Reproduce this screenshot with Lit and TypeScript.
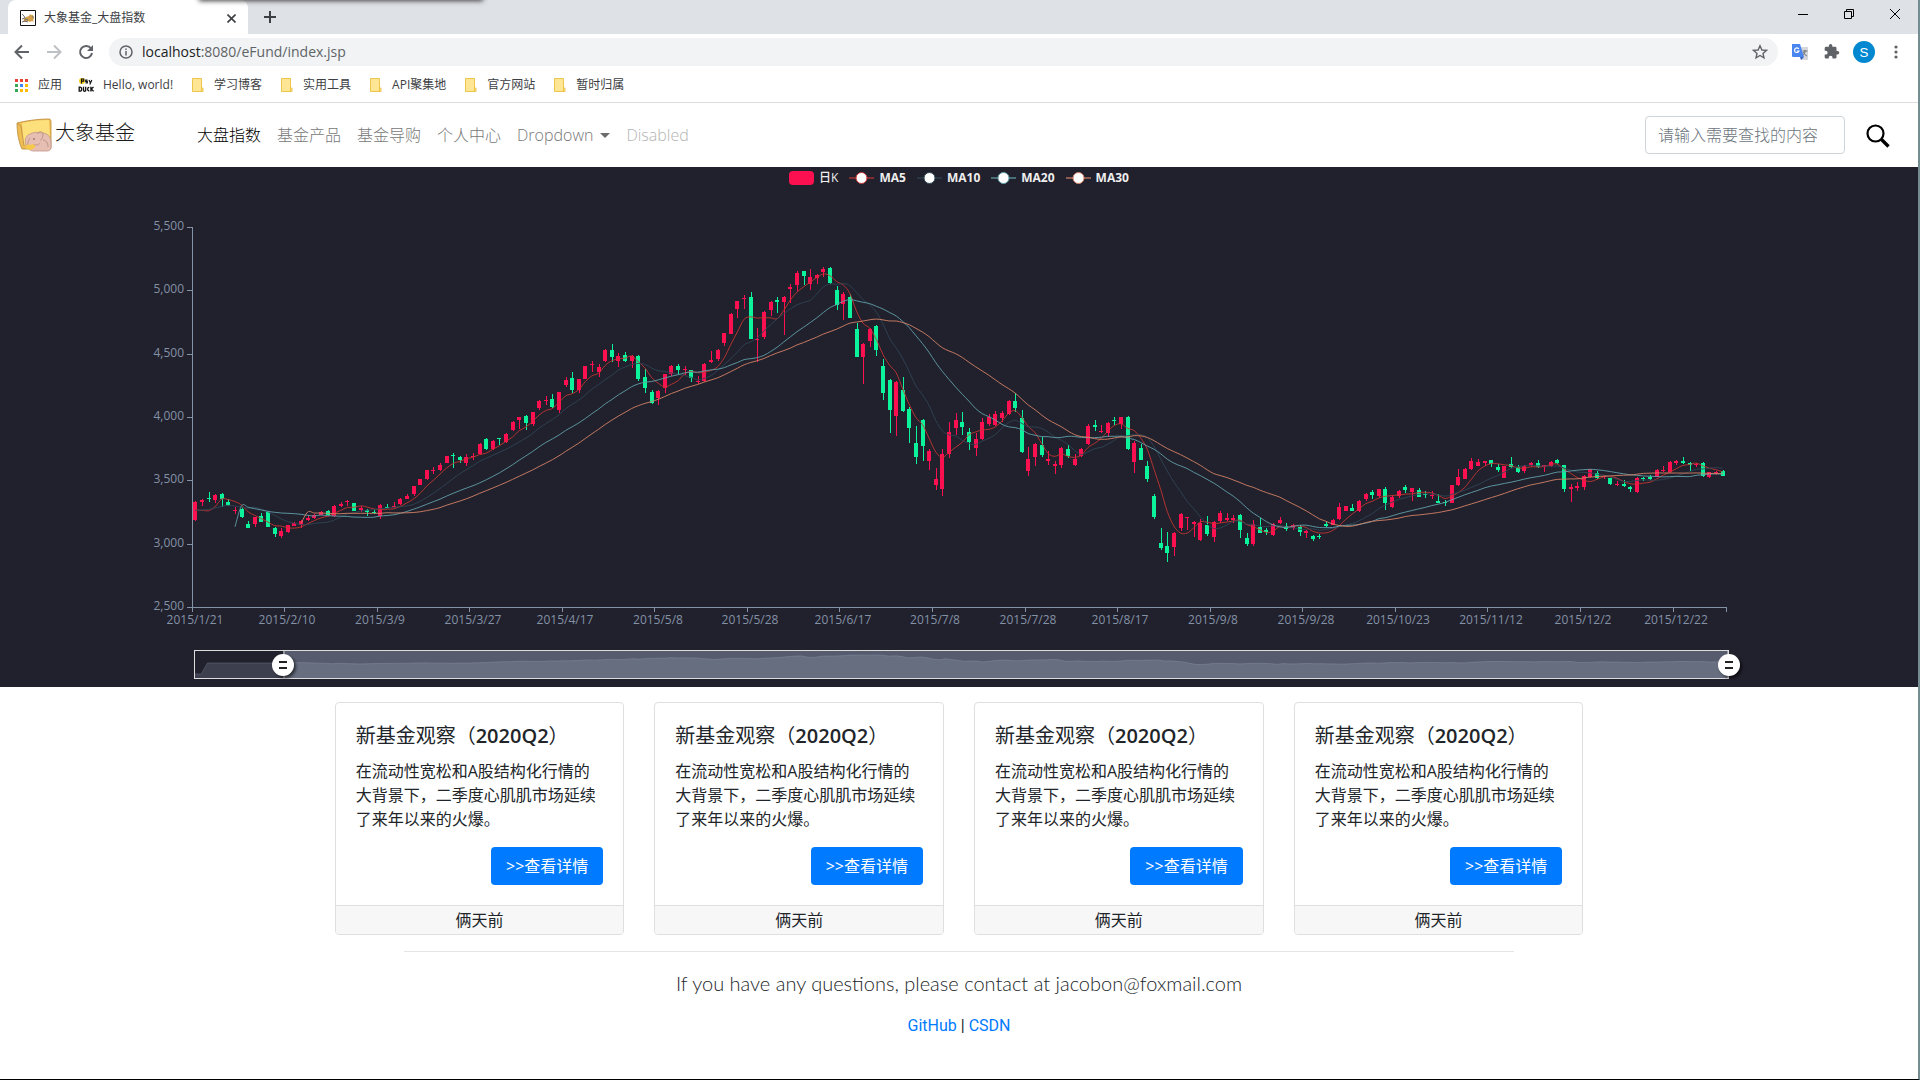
import { LitElement, html, css, svg } from "lit";
import { customElement, property, state } from "lit/decorators.js";

/* ---------- Price data ---------- */

interface Candle {
  up: boolean;
  top: number;
  bottom: number;
  high: number;
  low: number;
}

// Each band holds consecutive sessions as body top, body bottom, high, low.
// r = rising day, g = falling day. Figures are thirds of a unit below the band's base.
const BANDS: Array<[number, string]> = [
  [777, `r155,211,153,213 r149,157,147,167 g144,148,126,155 r134,150,132,158 g131,148,130,170
    g155,165,147,167 r179,182,171,192 g176,201,170,203 g223,234,213,235 r202,222,200,231
    g198,215,190,216 g185,230,184,232 g234,252,231,261 r243,258,235,263 r226,247,225,249
    r220,227,217,228 r213,226,211,233 r204,209,194,213 r196,205,193,206 r185,194,183,195
    g183,196,181,197 r167,197,165,202 r162,168,157,170 r153,155,151,167 g159,182,158,183
    r174,180,169,186 g180,186,178,197 g186,189,180,192 r165,198,163,206 g170,173,163,174
    r169,172,157,174 r148,162,145,165 r138,146,133,147 r108,132,107,137 r88,104,87,106
    r60,88,59,90 r60,64,52,73 r45,60,40,64 r18,39,17,40 g15,18,10,53 g21,30,18,40
    r22,38,13,47 r18,22,10,31`],
  [387, `r371,401,368,404 g357,386,353,391 r362,387,360,389 g354,358,353,375 r342,366,340,369
    r305,330,303,333 r292,299,291,327 g288,308,285,329 r277,311,275,317 r243,264,241,269
    r239,243,227,256 g238,260,223,265 r217,270,215,278 r180,195,171,201 g175,209,155,219
    r178,210,177,218 r138,177,137,178 r132,135,122,155 r141,156,132,171 r90,123,88,125
    g91,111,72,126 r108,122,100,140 g105,123,97,125 r108,122,105,144 g108,177,105,183
    g171,203,147,219 g215,248,210,251 r212,234,210,254 r163,203,161,219 r138,161,136,168
    g138,149,132,161 r147,150,139,164 g151,173,149,185 r183,186,168,193 r132,183,130,185
    r121,126,93,128 r90,117,88,123 r40,69,38,77`],
  [147, `r221,281,219,282 r184,206,182,234 r173,177,165,207 g172,296,155,298 r297,301,264,367
    r216,290,213,296 r185,209,182,227 g180,185,172,219 r171,185,168,285 r142,146,131,190
    r99,134,94,152 g94,107,93,135 r111,131,88,150 r104,113,102,132 r87,96,82,111
    g84,128,82,131 g149,194,139,211 r162,192,156,240 g172,233,163,235 g267,350,249,351
    r311,352,309,431 r267,302,265,321 g259,331,256,348 g378,458,357,479 g420,511,417,579
    r425,529,423,588 g449,512,410,516 g507,565,501,609 g608,651,558,672 g540,617,537,663
    r633,662,627,689 r717,735,683,751 r641,746,627,769 r576,642,546,654 r541,563,519,585
    g546,560,516,585 g576,605,564,630 r598,623,579,648 r546,597,533,600 r531,552,522,557
    r522,555,514,557 r519,533,514,546 r483,523,480,525 g484,504,458,516 g535,635,511,638
    r658,693,621,708 r611,650,609,678 g615,645,591,650 r657,662,633,675 r673,678,663,702
    r623,675,621,683 g628,648,614,654 r658,675,641,678 r627,648,624,650 r558,612,552,615`],
  [537, `g166,170,151,183 r183,186,166,189 r158,190,156,201 g150,154,140,164 r142,162,141,177
    g141,237,139,239 r219,276,213,309 g234,269,222,270 g288,328,273,335 g378,441,372,447
    g519,535,474,541 g528,549,486,577 r489,530,487,557 r432,474,430,482 r441,444,441,479
    r457,461,452,501 r459,511,447,514 g464,492,438,497 r456,500,453,517 r429,453,423,458
    r444,449,429,454 r444,450,435,458 g435,479,433,503 g504,521,490,527 r462,521,450,527
    g471,489,444,490 g480,485,474,495 r461,495,459,497 r450,460,440,461 g468,477,460,482
    r466,473,462,479 g471,486,464,497 r482,488,480,505 g498,507,495,512 g498,502,491,506
    g461,467,455,471 r450,465,447,466 r411,448,399,449 r409,422,408,424 g414,422,403,424
    r392,424,390,426 r372,386,370,393 g367,374,360,387 r358,378,357,384 g358,399,351,419
    r380,410,376,413 r364,378,360,383`],
  [717, `g170,180,166,188 r175,185,174,214 g180,200,174,201 g191,195,184,203 r194,197,183,207
    g213,218,193,219 g215,220,209,227 r166,218,164,219 r141,166,118,168 r116,146,114,147
    r94,117,85,119 r97,107,86,109 r94,99,92,109 g91,101,89,111 g111,121,101,126
    r109,143,107,144 g101,111,82,114 g110,125,106,129 r107,123,105,129 r100,105,96,110
    g100,110,91,113 r106,112,104,126 r95,109,93,110 g90,100,87,102 g106,177,104,185
    r172,176,162,215 r168,173,157,182 r137,170,134,179 r118,142,116,143 g129,144,124,147
    r137,141,135,148 g144,162,143,165 r161,166,153,168 g162,168,150,172 g172,178,168,185
    r143,187,141,189 g143,147,140,153 g141,147,136,150 r120,140,118,141 r121,124,108,126
    r97,127,94,129 r94,98,91,106 g94,99,81,102 g100,106,97,123 r101,106,99,111
    g99,138,96,141 r127,141,125,144 r125,129,123,136 g124,137,121,138`],
];

const CANDLES: Candle[] = BANDS.flatMap(([base, rows]) =>
  rows.trim().split(/\s+/).map((row) => {
    const [top, bottom, high, low] = row.slice(1).split(",").map((n) => (base + Number(n)) / 3);
    return { up: row[0] === "r", top, bottom, high, low };
  }),
);

const CLOSES = CANDLES.map((c) => (c.up ? c.top : c.bottom));

const PLOT = { left: 192, right: 1726, top: 36, bottom: 416 };
const PITCH = (PLOT.right - PLOT.left) / CANDLES.length;
const xAt = (i: number) => PLOT.left + PITCH * (i + 0.5);

interface Average {
  name: string;
  days: number;
  color: string;
  start: number;
  lead: number[];
}

// The lead values cover the sessions before a full window of prices exists.
const AVERAGES: Average[] = [
  { name: "MA5", days: 5, color: "#c23531", start: 0, lead: [180, 181, 182, 170] },
  { name: "MA10", days: 10, color: "#2f4554", start: 0, lead: [181, 180, 178, 174, 169, 166, 168, 172, 174] },
  { name: "MA20", days: 20, color: "#61a0a8", start: 6, lead: [230, 167, 172, 176, 180, 184, 187, 189, 190, 191, 193, 196, 198] },
  { name: "MA30", days: 30, color: "#d48265", start: 16, lead: [220, 186, 189, 189, 190, 191, 191, 190, 190, 190, 190, 190, 190] },
];

function averagePoints(avg: Average): Array<[number, number]> {
  const points: Array<[number, number]> = avg.lead.map((v, i) => [xAt(avg.start + i), (777 + v) / 3]);
  for (let i = avg.days - 1; i < CLOSES.length; i++) {
    const span = CLOSES.slice(i - avg.days + 1, i + 1);
    points.push([xAt(i), span.reduce((a, b) => a + b, 0) / avg.days]);
  }
  return points;
}

function smoothPath(pts: Array<[number, number]>): string {
  let d = `M${pts[0][0].toFixed(1)},${pts[0][1].toFixed(1)}`;
  for (let i = 0; i < pts.length - 1; i++) {
    const a = pts[Math.max(0, i - 1)];
    const b = pts[i];
    const c = pts[i + 1];
    const e = pts[Math.min(pts.length - 1, i + 2)];
    const ctrl = [b[0] + (c[0] - a[0]) / 6, b[1] + (c[1] - a[1]) / 6, c[0] - (e[0] - b[0]) / 6, c[1] - (e[1] - b[1]) / 6, c[0], c[1]];
    d += `C${ctrl.map((n) => n.toFixed(1)).join(",")}`;
  }
  return d;
}

const DATES = ["2015/1/21", "2015/2/10", "2015/3/9", "2015/3/27", "2015/4/17", "2015/5/8", "2015/5/28", "2015/6/17", "2015/7/8",
  "2015/7/28", "2015/8/17", "2015/9/8", "2015/9/28", "2015/10/23", "2015/11/12", "2015/12/2", "2015/12/22"];
const DATE_STEP = 14;
const PRICES = ["5,500", "5,000", "4,500", "4,000", "3,500", "3,000", "2,500"];

/* ---------- Browser frame ---------- */

const folder = svg`<svg width="12" height="14" viewBox="0 0 12 14" aria-hidden="true">
  <path d="M.5.5h9v9.500h1.500v3.500H.5z" fill="#ffe694" stroke="#edc54c"/>
  <path d="M9.500 10v3" stroke="#edc54c" fill="none"/></svg>`;

@customElement("browser-bar")
export class BrowserBar extends LitElement {
  static styles = css`
    :host { display: block; font: 12px/16px "Open Sans", "Noto Sans CJK SC", sans-serif; color: #3c4043; }
    button { border: 0; padding: 0; background: none; color: inherit; display: grid; place-items: center; }
    .strip { position: relative; display: flex; height: 34px; background: #dee1e6; padding-left: 8px; overflow: hidden; }
    .overhang { position: absolute; left: 200px; top: -6px; width: 282px; height: 6px; box-shadow: 0 0 5px 1px #444; }
    .tab { width: 240px; box-sizing: border-box; background: #fff; border-radius: 8px 8px 0 0; display: flex; align-items: center; gap: 8px; padding: 2px 12px 0 12px; }
    .tab span { flex: 1; }
    .add { width: 44px; }
    .window { margin-left: auto; display: flex; }
    .window button { width: 46px; height: 28px; color: #000; }
    .tools { display: flex; align-items: center; height: 36px; padding: 0 6px; }
    .tools > button { width: 32px; height: 32px; color: #5f6368; }
    .address { flex: 1; display: flex; align-items: center; gap: 9px; height: 28px; margin: 0 6px 0 7px; padding: 0 10px; border-radius: 14px; background: #f1f3f4; color: #5f6368; font-size: 14px; }
    .address p { flex: 1; margin: 0; }
    .address b { font-weight: 400; color: #202124; }
    .avatar { display: grid; place-items: center; width: 22px; height: 22px; border-radius: 50%; background: #0288d1; color: #fff; }
    .marks { display: flex; align-items: center; gap: 19px; height: 30px; padding: 0 15px 2px; border-bottom: 1px solid #dadce0; }
    .marks a { display: flex; align-items: center; gap: 10px; color: inherit; text-decoration: none; }
    .marks .near { gap: 9px; margin-left: -3px; }
  `;

  render() {
    const dots = ["#ea4335", "#ea4335", "#ea4335", "#34a853", "#4285f4", "#fbbc05", "#34a853", "#fbbc05", "#fbbc05"];
    return html`
      <div class="strip">
        <div class="tab">
          <svg width="16" height="16" viewBox="0 0 16 16" aria-hidden="true">
            <path d="M.5.5h15v15H.5z" fill="#fff" stroke="#111"/>
            <path d="M3 12l1-3 2-2 3-1 1-2 1 1h2l1 4-1 1 1 2-2-1-2 1-2-1-3 1z" fill="#d2a04a"/>
            <path d="M2 4l2 2 1 2-3 1M5 9l3 1M2 12l3-1 3 1M12 7h2" stroke="#6d6c70" fill="none"/>
          </svg>
          <span>大象基金_大盘指数</span>
          <button aria-label="Close tab"><svg width="9" height="9" viewBox="0 0 9 9"><path d="M.5.5l8 8m0-8l-8 8" stroke="#3c4043" stroke-width="1.600"/></svg></button>
        </div>
        <button class="add" aria-label="New tab"><svg width="12" height="12" viewBox="0 0 12 12"><path d="M6 0v12M0 6h12" stroke="#3c4043" stroke-width="2"/></svg></button>
        <div class="window">
          <button aria-label="Minimize"><svg width="10" height="10" viewBox="0 0 10 10"><path d="M0 5.500h10" stroke="currentColor"/></svg></button>
          <button aria-label="Restore"><svg width="10" height="10" viewBox="0 0 10 10"><path d="M.5 2.500h7v7h-7zM2.500 2.500v-2h7v7h-2" fill="none" stroke="currentColor"/></svg></button>
          <button aria-label="Close"><svg width="10" height="10" viewBox="0 0 10 10"><path d="M0 0l10 10M10 0L0 10" stroke="currentColor"/></svg></button>
        </div>
        <div class="overhang"></div>
      </div>
      <div class="tools">
        <button aria-label="Back"><svg width="16" height="16" viewBox="0 0 16 16"><path d="M15 8H2M8 1.500L1.500 8 8 14.500" fill="none" stroke="#5f6368" stroke-width="2"/></svg></button>
        <button aria-label="Forward"><svg width="16" height="16" viewBox="0 0 16 16"><path d="M1 8h13M8 1.500L14.500 8 8 14.500" fill="none" stroke="#bdc1c6" stroke-width="2"/></svg></button>
        <button aria-label="Reload"><svg width="16" height="16" viewBox="0 0 16 16"><path d="M13 4.500A6 6 0 1 0 14 9" fill="none" stroke="#5f6368" stroke-width="2"/><path d="M15 1v6H9z" fill="#5f6368"/></svg></button>
        <div class="address">
          <svg width="14" height="14" viewBox="0 0 14 14" aria-hidden="true"><circle cx="7" cy="7" r="6" fill="none" stroke="#5f6368" stroke-width="1.500"/><path d="M7 6v4.500M7 3.500v1.500" stroke="#5f6368" stroke-width="1.500"/></svg>
          <p><b>localhost</b>:8080/eFund/index.jsp</p>
          <button aria-label="Bookmark"><svg width="16" height="16" viewBox="0 0 16 16"><path d="M8 1.800l1.900 4.200 4.500.4-3.400 3 1 4.400L8 11.500l-4 2.300 1-4.400-3.400-3 4.500-.4z" fill="none" stroke="#5f6368" stroke-width="1.400"/></svg></button>
        </div>
        <button aria-label="Translate"><svg width="16" height="16" viewBox="0 0 16 16"><path d="M6 3h10v13H9z" fill="#d5d7da"/><path d="M0 0h8l4 13H1a1 1 0 0 1-1-1z" fill="#4a86f0"/><path d="M9 16l3-3H8z" fill="#3a63c0"/><path d="M6.800 5A2.300 2.300 0 1 0 7 7H4.800" stroke="#fff" stroke-width="1.200" fill="none"/><path d="M10.500 7h5M13 6v1c0 2-1 3.500-2 4M11.500 8c.5 2 2 3.500 3.500 4" stroke="#6b7075" fill="none"/></svg></button>
        <button aria-label="Extensions"><svg width="16" height="16" viewBox="1 1 23 23"><path fill="#5f6368" d="M20.500 11H19V7a2 2 0 0 0-2-2h-4V3.500a2.500 2.500 0 0 0-5 0V5H4a2 2 0 0 0-2 2v3.800h1.500a2.700 2.700 0 0 1 0 5.400H2V20c0 1.100.9 2 2 2h3.800v-1.500a2.700 2.700 0 0 1 5.400 0V22H17a2 2 0 0 0 2-2v-4h1.500a2.500 2.500 0 0 0 0-5z"/></svg></button>
        <button aria-label="Profile"><span class="avatar">S</span></button>
        <button aria-label="Menu"><svg width="4" height="14" viewBox="0 0 4 14"><g fill="#5f6368"><circle cx="2" cy="2" r="1.600"/><circle cx="2" cy="7" r="1.600"/><circle cx="2" cy="12" r="1.600"/></g></svg></button>
      </div>
      <nav class="marks">
        <a href="#apps"><svg width="13" height="13" viewBox="0 0 13 13" aria-hidden="true">${dots.map((c, i) => svg`<path d="M${(i % 3) * 5},${Math.floor(i / 3) * 5}h3v3h-3z" fill=${c}/>`)}</svg>应用</a>
        <a class="near" href="#hello"><svg width="16" height="16" viewBox="0 0 16 16" aria-hidden="true">
          <circle cx="4" cy="4" r="3" fill="#f8d21c"/>
          <path d="M3.500 1.500v5M3.500 2h2.200v2.200H3.500M9.500 3H7.700v1.300h1.600v1.500H7.500M11 3l1.200 2.500M13.800 3l-2 4.500" stroke="#111" fill="none" stroke-width="1.200"/>
          <path d="M1.200 10.200v4h.8c2.200 0 2.200-4 0-4zM5.500 9.800v3.700c0 1 2.200 1 2.200 0V9.800M11.300 10.500c-2-.8-2.300 3.800 0 3.200M12.900 9.800v4.700M15.500 10l-2.300 2 2.400 2.300" stroke="#111" fill="none" stroke-width="1.300"/></svg>Hello, world!</a>
        ${["学习博客", "实用工具", "API聚集地", "官方网站", "暂时归属"].map((t) => html`<a href="#folder">${folder}${t}</a>`)}
      </nav>
    `;
  }
}

/* ---------- Site navigation ---------- */

@customElement("site-nav")
export class SiteNav extends LitElement {
  static styles = css`
    :host { display: block; font: 300 16px/24px "Open Sans", "Noto Sans CJK SC", sans-serif; }
    header { display: flex; align-items: center; padding: 8px 16px; min-height: 48px; }
    a { text-decoration: none; color: #777; }
    .brand { display: flex; align-items: center; gap: 3px; font-size: 20px; line-height: 30px; color: #1a1a1a; margin-right: 62px; }
    .brand span { padding-bottom: 4px; }
    nav { display: flex; gap: 16px; flex: 1; }
    .active { color: #000; }
    .disabled { color: #b4b4b4; }
    .caret { display: inline-block; margin-left: 7px; vertical-align: 3px; border: 5px solid transparent; border-top-color: #6c6c6c; border-bottom: 0; }
    form { display: flex; align-items: center; gap: 9px; }
    input { box-sizing: border-box; width: 200px; height: 38px; padding: 6px 12px; border: 1px solid #ced4da; border-radius: 4px; font: inherit; color: #495057; }
    input::placeholder { color: #6c757d; opacity: 1; }
    button { border: 0; background: none; padding: 8px 12px 6px; display: grid; }
  `;

  render() {
    return html`
      <header>
        <a class="brand" href="#home">
          <svg width="36" height="34" viewBox="0 0 36 34" aria-hidden="true">
            <path d="M1 5c8-2 20-4 32-4 2 0 2 2 2 4v24c0 3-4 3-6 2L6 31C3 25 1 15 1 5z" fill="#eebd54" stroke="#b98a3c" stroke-width=".8"/>
            <path d="M6 5c8-2 17-3 27-3l1 19-27 6z" fill="#fbe07c"/>
            <path d="M1 5l4 3 3 20" fill="none" stroke="#c79647"/>
            <path d="M11 29c-3-5-2-11 3-13 4-2 8-2 12-1 5 0 8 3 9 8v7c0 2-2 3-4 3H18c-2 0-4 0-7-4z" fill="#e6bfb2" stroke="#c0958a" stroke-width=".8"/>
            <path d="M22 16c0-3 5-3 5 0s-1 6-3 6M14 20c-2 3-3 6-1 8M27 22c3 0 5 3 5 7M18 26c2 2 5 1 6-1" fill="none" stroke="#c0958a"/>
            <circle cx="18" cy="21" r=".8" fill="#6b4a40"/>
            <path d="M10 29c0-3 3-3 4-2 3-2 6 0 5 2-1 3-9 4-9 0z" fill="#f7c948"/>
          </svg>
          <span>大象基金</span>
        </a>
        <nav>
          <a class="active" href="#index">大盘指数</a>
          <a href="#products">基金产品</a>
          <a href="#guide">基金导购</a>
          <a href="#me">个人中心</a>
          <a href="#more">Dropdown<span class="caret"></span></a>
          <a class="disabled" href="#disabled" aria-disabled="true">Disabled</a>
        </nav>
        <form @submit=${(e: Event) => e.preventDefault()}>
          <input type="search" aria-label="搜索" placeholder="请输入需要查找的内容">
          <button aria-label="提交搜索"><svg width="24" height="24" viewBox="0 0 24 24"><circle cx="9.500" cy="9.500" r="8" fill="none" stroke="#000" stroke-width="2.200"/><path d="M15.500 15.500l7 7" stroke="#000" stroke-width="3.400"/></svg></button>
        </form>
      </header>
    `;
  }
}

/* ---------- Candlestick chart ---------- */

@customElement("kline-chart")
export class KlineChart extends LitElement {
  static styles = css`
    :host { display: block; background: #21202d; font: 12px/22px "Open Sans", "Noto Sans CJK SC", sans-serif; padding-bottom: 8px; }
    .legend { display: flex; justify-content: center; gap: 11px; height: 22px; margin: 0; padding: 0 0 2px; list-style: none; color: #eee; font-weight: 700; }
    .legend li { display: flex; align-items: center; gap: 5px; }
    .legend li:first-child { font-weight: 500; }
    .plot { display: block; width: 100%; }
    .zoom { display: grid; grid-template-columns: 194fr 1535fr 189fr; margin-top: 9px; }
    .track { grid-column: 2; display: grid; height: 29px; box-sizing: border-box; border: 1px solid #ddd; }
    .track > * { grid-area: 1 / 1; }
    .shadow { width: 100%; height: 27px; display: block; }
    input { appearance: none; -webkit-appearance: none; margin: 0 -12px; height: 27px; background: none; pointer-events: none; z-index: 1; }
    input::-webkit-slider-thumb {
      -webkit-appearance: none; pointer-events: auto; width: 22px; height: 22px; border-radius: 50%;
      background: linear-gradient(#222, #222) 7px 7px / 8px 2px no-repeat, linear-gradient(#222, #222) 7px 13px / 8px 2px no-repeat, #fff;
      box-shadow: 2px 2px 3px rgba(0, 0, 0, 0.6);
    }
    text { font-size: 12px; fill: #8392a5; }
  `;

  @state() private from = 58;
  @state() private to = 1000;

  private renderAxes() {
    const step = (PLOT.bottom - PLOT.top) / 6;
    const ticks = DATES.map((_, i) => Math.floor(PLOT.left + PITCH * DATE_STEP * i));
    return svg`
      <g stroke="#8392a5" shape-rendering="crispEdges">
        <path d="M${PLOT.left},${PLOT.top}V${PLOT.bottom}H${PLOT.right}" fill="none"/>
        ${PRICES.map((_, i) => svg`<path d="M${PLOT.left - 5},${Math.round(PLOT.top + step * i)}h5"/>`)}
        ${[...ticks, PLOT.right].map((x) => svg`<path d="M${x},${PLOT.bottom}v5"/>`)}
      </g>
      ${PRICES.map((p, i) => svg`<text x="184" y=${Math.round(PLOT.top + step * i) + 3} text-anchor="end">${p}</text>`)}
      ${DATES.map((d, i) => svg`<text x=${Math.floor(xAt(i * DATE_STEP))} y="433" text-anchor="middle">${d}</text>`)}`;
  }

  private renderCandles() {
    return CANDLES.map((c, i) => {
      const x = Math.round(xAt(i));
      const color = c.up ? "#fd1050" : "#0cf49b";
      const top = Math.round(c.top);
      const height = Math.max(1, Math.round(c.bottom) - top);
      return svg`<path d="M${x},${Math.round(c.high)}V${Math.round(c.low)}" stroke=${color}/>
        <path d="M${x - 2},${top}h4v${height}h-4z" fill=${color}/>`;
    });
  }

  private shadowPath() {
    const pre = [23, 23, ...Array(12).fill(12)];
    const ys = [...pre, ...CLOSES.map((y) => 12 - (314 - y) * 0.034)];
    const gap = 1534 / (ys.length - 1);
    return ys.map((y, i) => `L${(i * gap).toFixed(1)},${y.toFixed(1)}`).join("");
  }

  render() {
    const a = this.from * 1.534;
    const b = this.to * 1.534;
    const shadow = this.shadowPath();
    return html`
      <ul class="legend">
        <li><svg width="25" height="14"><rect width="25" height="14" rx="4" fill="#fd1050"/></svg>日K</li>
        ${AVERAGES.map((m) => html`<li><svg width="25" height="14"><path d="M0 7h25" stroke=${m.color} stroke-width="2" opacity=".6"/><circle cx="12.500" cy="7" r="5.500" fill="#fff" stroke=${m.color}/></svg>${m.name}</li>`)}
      </ul>
      <svg class="plot" viewBox="0 0 1918 450" role="img" aria-label="日K">
        <g shape-rendering="crispEdges">${this.renderCandles()}</g>
        ${AVERAGES.map((m) => svg`<path d=${smoothPath(averagePoints(m))} fill="none" stroke=${m.color} opacity=".9"/>`)}
        ${this.renderAxes()}
      </svg>
      <div class="zoom">
        <div class="track">
          <svg class="shadow" viewBox="0 0 1534 27" preserveAspectRatio="none" aria-hidden="true">
            <path d="M0,27${shadow}V27z" fill="#3d3f4e"/>
            <path d="M0,23${shadow}" fill="none" stroke="#5a5f70" stroke-width=".7"/>
            <path d="M${a},0H${b}V27H${a}z" fill="#a7b7cc" fill-opacity=".4"/>
            <path d="M${a},0V27M${b},0V27" stroke="#ddd"/>
          </svg>
          <input type="range" aria-label="起始" min="0" max="1000" .value=${String(this.from)} @input=${(e: Event) => (this.from = Number((e.target as HTMLInputElement).value))}>
          <input type="range" aria-label="结束" min="0" max="1000" .value=${String(this.to)} @input=${(e: Event) => (this.to = Number((e.target as HTMLInputElement).value))}>
        </div>
      </div>
    `;
  }
}

/* ---------- Article card ---------- */

@customElement("fund-card")
export class FundCard extends LitElement {
  static styles = css`
    :host { display: flex; flex-direction: column; box-sizing: border-box; border: 1px solid #dfdfdf; border-radius: 4px; overflow: hidden; color: #212529; }
    .body { display: flex; flex-direction: column; padding: 21px 20px 20px; }
    h5 { margin: 0 0 11px; font-size: 20px; line-height: 24px; font-weight: 400; }
    b { font-weight: 600; }
    p { margin: 0 0 16px; }
    button { align-self: flex-end; height: 38px; padding: 0 15px; border: 0; border-radius: 4px; background: #007bff; color: #fff; font: inherit; }
    footer { padding: 2px 20px; border-top: 1px solid #dfdfdf; background: #f7f7f7; text-align: center; }
  `;

  @property() heading = "";
  @property() period = "";
  @property() summary = "";
  @property() age = "";

  render() {
    return html`
      <div class="body">
        <h5>${this.heading}（<b>${this.period}</b>）</h5>
        <p>${this.summary}</p>
        <button>&gt;&gt;查看详情</button>
      </div>
      <footer>${this.age}</footer>
    `;
  }
}

/* ---------- Page ---------- */

@customElement("app-root")
export class AppRoot extends LitElement {
  static styles = css`
    :host { display: block; box-sizing: border-box; min-height: 100vh; background: #fff; border-right: 2px solid #738d90; border-bottom: 1px solid #000; font: 16px/24px "Open Sans", "Noto Sans CJK SC", sans-serif; color: #212529; }
    .cards { box-sizing: border-box; width: 66.6667%; margin: 0 auto; padding: 15px 15px 0; display: grid; grid-template-columns: repeat(4, 1fr); gap: 30px; }
    .foot { max-width: 1110px; margin: 16px auto 0; border-top: 1px solid #e5e5e5; text-align: center; font-family: Roboto, "Noto Sans CJK SC", sans-serif; }
    .foot p { margin: 16px 0 0; }
    .foot .lead { font: 300 20px/30px Lato, "Noto Sans CJK SC", sans-serif; }
    .foot a { color: #007bff; text-decoration: none; }
  `;

  render() {
    return html`
      <browser-bar></browser-bar>
      <site-nav></site-nav>
      <kline-chart></kline-chart>
      <main class="cards">
        ${[0, 1, 2, 3].map(() => html`<fund-card heading="新基金观察" period="2020Q2" age="俩天前"
          summary="在流动性宽松和A股结构化行情的大背景下，二季度心肌肌市场延续了来年以来的火爆。"></fund-card>`)}
      </main>
      <footer class="foot">
        <p class="lead">If you have any questions, please contact at jacobon@foxmail.com</p>
        <p><a href="#github">GitHub</a> | <a href="#csdn">CSDN</a></p>
      </footer>
    `;
  }
}
